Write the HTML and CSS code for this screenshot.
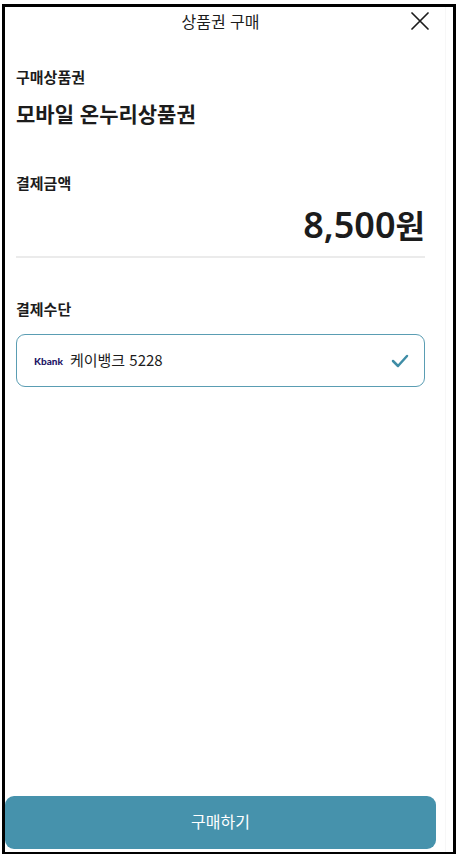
FILE: index.html
```
<!DOCTYPE html>
<html lang="ko">

<head>
    <meta charset="UTF-8">
    <meta name="viewport" content="width=device-width, initial-scale=1.0">
    <title>상품권 구매</title>
    <link rel="stylesheet" href="styles.css">
</head>

<body>
    <div class="frame">
        <div class="screen">
            <header class="topbar">
                <h1>상품권 구매</h1>
                <button type="button" class="close" aria-label="닫기">
                    <svg width="18" height="18" viewBox="0 0 18 18" fill="none" stroke="#1c1c1c" stroke-width="1.7" stroke-linecap="round">
                        <path d="M1 1L17 17M17 1L1 17" />
                    </svg>
                </button>
            </header>

            <main class="content">
                <section class="product">
                    <h2>구매상품권</h2>
                    <p class="product-name">모바일 온누리상품권</p>
                </section>

                <section class="price">
                    <h2>결제금액</h2>
                    <p class="amount">8,500<span class="won">원</span></p>
                </section>

                <section class="payment">
                    <h2>결제수단</h2>
                    <button type="button" class="method" aria-pressed="true">
                        <span class="bank-logo">Kbank</span>
                        <span class="bank-name">케이뱅크 5228</span>
                        <svg class="check" width="18" height="14" viewBox="0 0 18 14" fill="none" stroke="#3f8da6" stroke-width="2.5" stroke-linecap="round" stroke-linejoin="round">
                            <path d="M2 7L7 12L16 2" />
                        </svg>
                    </button>
                </section>
            </main>

            <button type="button" class="buy">구매하기</button>
        </div>
    </div>
</body>

</html>
```
FILE: styles.css
```
* {
    box-sizing: border-box;
}

body {
    margin: 0;
    padding: 4px 2px 0;
    background-color: #fff;
    color: #1c1c1c;
    font-family: "Noto Sans CJK KR", sans-serif;
}

h1,
h2,
p {
    margin: 0;
}

button {
    font-family: inherit;
    color: inherit;
    cursor: pointer;
}

.frame {
    display: flex;
    min-height: calc(100vh - 4px);
    padding-right: 7px;
    border: 3px solid #000;
    border-bottom-width: 2px;
}

.screen {
    display: flex;
    flex-direction: column;
    flex: 1;
    border-right: 1px solid #f7f7f7;
}

.topbar {
    display: grid;
    grid-template-columns: 32px 1fr 32px;
    align-items: center;
    height: 28px;
    padding: 0 9px 0 0;
}

.topbar h1 {
    grid-column: 2;
    font-size: 16px;
    font-weight: 400;
    line-height: 28px;
    text-align: center;
}

.close {
    display: flex;
    align-items: center;
    justify-content: center;
    height: 28px;
    padding: 0;
    border: 0;
    background: none;
}

.content {
    flex: 1;
    padding: 32px 20px 32px 11px;
}

h2 {
    font-size: 15px;
    font-weight: 700;
    line-height: 20px;
}

.product-name {
    margin-top: 11px;
    font-size: 21px;
    font-weight: 700;
    line-height: 30px;
}

.price {
    margin-top: 45px;
    border-bottom: 2px solid #ebebeb;
}

.amount {
    padding: 8px 0 7px;
    font-family: "Noto Sans", "Noto Sans CJK KR", sans-serif;
    font-size: 36px;
    font-weight: 600;
    line-height: 48px;
    text-align: right;
}

.won {
    font-family: "Noto Sans CJK KR", sans-serif;
    font-size: 32px;
    line-height: 32px;
}

.payment {
    margin-top: 41px;
}

.method {
    display: flex;
    align-items: center;
    gap: 7px;
    width: 100%;
    height: 53px;
    margin-top: 15px;
    padding: 0 15px 0 17px;
    border: 1px solid #5a9db3;
    border-radius: 9px;
    background-color: #fff;
}

.bank-logo {
    color: #251566;
    font-family: Lato, sans-serif;
    font-size: 10px;
    font-weight: 900;
}

.bank-name {
    font-size: 15px;
    line-height: 22px;
    padding-bottom: 2px;
}

.check {
    margin-left: auto;
}

.buy {
    height: 53px;
    margin: 0 9px 3px 0;
    padding: 0 0 4px;
    border: 0;
    border-radius: 9px;
    background-color: #4692ac;
    color: #fff;
    font-size: 16px;
    line-height: 24px;
}
```
